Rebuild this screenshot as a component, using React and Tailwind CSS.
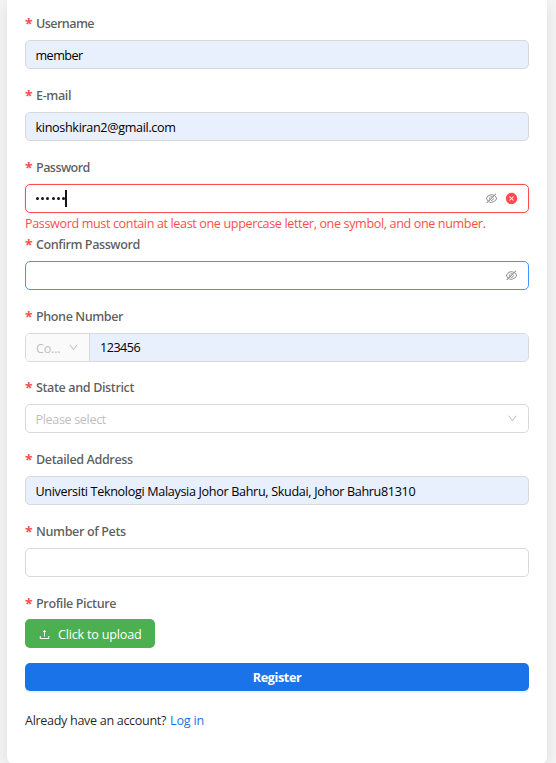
import { AiOutlineEyeInvisible, AiFillCloseCircle, AiOutlineDown, AiOutlineUpload } from "react-icons/ai";

function Field({ label, track = "tracking-[-0.4px]", gap = "mb-3", children }) {
  return (
    <div className={gap}>
      <div className="flex h-[31px] items-center pb-[2px] font-[540] text-[#000000a6]">
        <span className="w-[11px] pt-[1px] text-[14px] leading-none font-bold text-[#ff4d4f]">*</span>
        <label className={`whitespace-nowrap ${track}`}>{label}</label>
      </div>
      {children}
    </div>
  );
}

const box = "flex h-[29px] items-center rounded-[5px] border px-[10px] whitespace-nowrap";

function Filled({ children, track = "tracking-[-0.33px]" }) {
  return (
    <div className={`${box} border-[#d9d9d9] bg-[#e8effd] text-black`}>
      <span className={`-ml-[0.5px] pt-[2px] ${track}`}>{children}</span>
    </div>
  );
}

export default function App() {
  return (
    <div className="h-[763px] overflow-hidden bg-[#f5f5f5] pr-[9px] pl-[7px] font-['Open_Sans','Noto_Sans',sans-serif] text-[12.6px] leading-[20px]">
      <div className="h-[764px] rounded-b-[7px] bg-white px-[18px] pt-[9px] shadow-[0_4px_16px_rgba(0,0,0,0.1)]">
        <Field label="Username" track="tracking-[-0.6px]"><Filled track="tracking-[-0.55px]">member</Filled></Field>
        <Field label="E-mail"><Filled>kinoshkiran2@gmail.com</Filled></Field>
        <Field label="Password" gap="mb-0" track="tracking-[-0.6px]">
          <div className={`${box} border-[#ff4d4f] bg-white shadow-[0_0_0_1px_rgba(255,38,5,0.06)]`}>
            <div className="flex items-center gap-[2.2px]">
              {[0, 1, 2, 3, 4, 5].map((i) => (
                <span key={i} className="size-[3px] rounded-full bg-[#141414]" />
              ))}
              <span className="-ml-[2px] h-[17px] w-[2px] bg-[#141414]" />
            </div>
            <div className="ml-auto flex items-center gap-[7px]">
              <AiOutlineEyeInvisible className="size-[13px] text-[#00000073]" />
              <AiFillCloseCircle className="size-[13px] text-[#ff4d4f]" />
            </div>
          </div>
          <div className="h-[17px] pt-px whitespace-nowrap tracking-[-0.375px] text-[#ff4d4f]">
            Password must contain at least one uppercase letter, one symbol, and one number.
          </div>
        </Field>
        <Field label="Confirm Password" track="tracking-[-0.45px]">
          <div className={`${box} border-[#4096ff] bg-white`}>
            <AiOutlineEyeInvisible className="ml-auto size-[13px] text-[#00000073]" />
          </div>
        </Field>
        <Field label="Phone Number" gap="mb-[11px]" track="tracking-[-0.45px]">
          <div className="flex h-[29px] overflow-hidden rounded-[5px] border border-[#d9d9d9]">
            <div className="flex w-[64px] items-center border-r border-[#d9d9d9] bg-[#fafafa] pl-[10px] text-[#bfbfbf]">
              <span className="pt-[2px] tracking-[-0.2px]">Co...</span>
              <AiOutlineDown className="ml-auto mr-[10px] size-[11px]" />
            </div>
            <div className="flex flex-1 items-center bg-[#e8effd] pl-[10px] text-black">
              <span className="tracking-[-0.5px]">123456</span>
            </div>
          </div>
        </Field>
        <Field label="State and District">
          <div className={`${box} border-[#d9d9d9] text-[#bfbfbf]`}>
            <span className="-ml-[0.5px] pt-[2px] tracking-[-0.35px]">Please select</span>
            <AiOutlineDown className="ml-auto size-[11px]" />
          </div>
        </Field>
        <Field label="Detailed Address">
          <Filled>Universiti Teknologi Malaysia Johor Bahru, Skudai, Johor Bahru81310</Filled>
        </Field>
        <Field label="Number of Pets"><div className={`${box} border-[#d9d9d9]`} /></Field>
        <Field label="Profile Picture" gap="mb-[15px]">
          <button className="-mt-px flex h-[29px] w-[130px] items-center rounded-[5px] bg-[#4caf50] pl-[13px] whitespace-nowrap text-white">
            <AiOutlineUpload className="mt-px size-[13px]" />
            <span className="ml-[7px] pt-[2px] tracking-[-0.2px]">Click to upload</span>
          </button>
        </Field>
        <button className="flex h-[28px] w-full items-center justify-center rounded-[5px] bg-[#1a73e8] font-bold text-white shadow-[0_2px_0_rgba(5,145,255,0.1)]">
          <span className="pt-px tracking-[-0.38px]">Register</span>
        </button>
        <div className="mt-[20px] flex gap-[4px] whitespace-nowrap text-[#000000e0]">
          <span className="tracking-[-0.33px]">Already have an account?</span>
          <a className="tracking-[-0.2px] text-[#1a73e8]">Log in</a>
        </div>
      </div>
    </div>
  );
}
